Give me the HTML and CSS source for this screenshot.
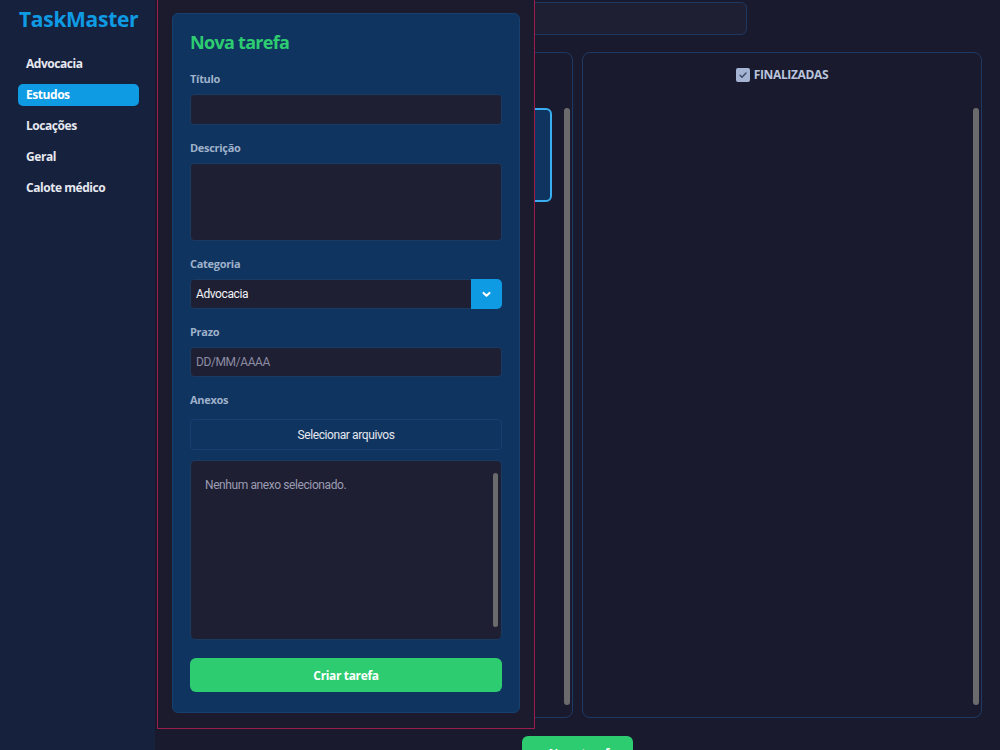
FILE: index.html
```html
<!DOCTYPE html>
<html lang="pt-BR">
<head>
  <meta charset="UTF-8" />
  <title>TaskMaster</title>
  <link rel="stylesheet" href="styles.css">
</head>
<body>
  <aside class="sidebar">
    <h1 class="brand">TaskMaster</h1>
    <nav class="cats">
      <a class="cat">Advocacia</a>
      <a class="cat active">Estudos</a>
      <a class="cat">Locações</a>
      <a class="cat">Geral</a>
      <a class="cat">Calote médico</a>
    </nav>
  </aside>

  <main class="board">
    <input class="search" type="text" />

    <div class="columns">
      <section class="column">
        <h3 class="col-title">EM ANDAMENTO</h3>
        <div class="col-body">
          <div class="col-list">
            <div class="task selected"></div>
          </div>
          <div class="rail"></div>
        </div>
      </section>
      <section class="column">
        <h3 class="col-title">
          <span class="check">
            <svg viewBox="0 0 14 14" width="14" height="14"><path d="M4 7.3l2 2 4-4.3" fill="none" stroke="#3b4a66" stroke-width="1.4" stroke-linecap="round" stroke-linejoin="round"/></svg>
          </span>
          FINALIZADAS
        </h3>
        <div class="col-body">
          <div class="col-list"></div>
          <div class="rail"></div>
        </div>
      </section>
    </div>

    <div class="actions">
      <button class="btn-new">+ Nova tarefa</button>
    </div>
  </main>

  <!-- painel de nova tarefa -->
  <div class="modal">
    <form class="modal-card">
      <h2 class="modal-title">Nova tarefa</h2>

      <div class="field">
        <label>Título</label>
        <input type="text" class="inp" />
      </div>

      <div class="field">
        <label>Descrição</label>
        <textarea class="inp area"></textarea>
      </div>

      <div class="field">
        <label>Categoria</label>
        <div class="select">
          <span class="select-value">Advocacia</span>
          <span class="select-btn">
            <svg viewBox="0 0 10 10" width="11" height="11"><path d="M2.3 3.6l2.7 2.6 2.7-2.6" fill="none" stroke="#fff" stroke-width="1.9" stroke-linecap="round" stroke-linejoin="round"/></svg>
          </span>
        </div>
      </div>

      <div class="field">
        <label>Prazo</label>
        <input type="text" class="inp short" placeholder="DD/MM/AAAA" />
      </div>

      <div class="field last">
        <label class="lbl-files">Anexos</label>
        <button type="button" class="btn-files">Selecionar arquivos</button>
        <div class="files">
          <p class="files-empty">Nenhum anexo selecionado.</p>
          <div class="rail"></div>
        </div>
      </div>

      <button type="submit" class="btn-create">Criar tarefa</button>
    </form>
  </div>
</body>
</html>
```

FILE: styles.css
```css
* {
  box-sizing: border-box;
}
body {
  margin: 0;
  height: 750px;
  overflow: hidden;
  display: flex;
  background-color: #1a1a2e;
  color: #e6e8ef;
  font-family: 'Open Sans', 'Noto Sans', sans-serif;
}

/* sidebar */
.sidebar {
  width: 155px;
  flex-shrink: 0;
  background-color: #16213e;
  padding: 4px 16px 0 18px;
}
.brand {
  margin: 0 0 0 1px;
  font-size: 21px;
  line-height: 30px;
  font-weight: 700;
  color: #0f9be4;
  letter-spacing: -0.3px;
}
.cats {
  display: flex;
  flex-direction: column;
  gap: 9px;
  margin-top: 19px;
}
.cat {
  display: block;
  height: 22px;
  line-height: 22px;
  padding-left: 8px;
  font-size: 12px;
  font-weight: 700;
  letter-spacing: -0.45px;
  color: #e6e8ef;
  border-radius: 5px;
}
.cat.active {
  background-color: #0f9be4;
  color: #fff;
}

/* board */
.board {
  flex: 1;
  padding: 2px 18px 0 18px;
  display: flex;
  flex-direction: column;
}
.search {
  flex-shrink: 0;
  width: 574px;
  height: 33px;
  background: #1f1f33;
  border: 1px solid #1d3a64;
  border-radius: 6px;
}
.columns {
  flex-shrink: 0;
  margin-top: 17px;
  height: 666px;
  display: flex;
  gap: 9px;
}
.column {
  flex: 1;
  display: flex;
  flex-direction: column;
  border: 1px solid #1d3a64;
  border-radius: 8px;
}
.col-title {
  margin: 0;
  height: 51px;
  display: flex;
  align-items: center;
  justify-content: center;
  gap: 4px;
  padding-bottom: 8px;
  font-size: 12px;
  font-weight: 700;
  letter-spacing: -0.35px;
  color: #b9c4dc;
}
.check {
  width: 14px;
  height: 14px;
  border-radius: 2px;
  background-color: #a4b4d2;
  display: flex;
}
.col-body {
  flex: 1;
  display: flex;
  gap: 12px;
  padding: 4px 2px 12px 8px;
}
.col-list {
  flex: 1;
}
.task {
  height: 94px;
  border-radius: 6px;
  background-color: #0f3460;
}
.task.selected {
  border: 2px solid #3aaef0;
}
.rail {
  width: 6px;
  border-radius: 3px;
  background-color: #6b6b6e;
}
.actions {
  display: flex;
  justify-content: center;
  margin-top: 18px;
}
.btn-new {
  width: 111px;
  height: 34px;
  border: none;
  border-radius: 6px;
  background-color: #2ecc71;
  color: #fff;
  font-family: inherit;
  font-size: 12px;
  font-weight: 700;
  letter-spacing: -0.35px;
}

/* modal */
.modal {
  position: fixed;
  left: 157px;
  top: -10px;
  width: 378px;
  height: 739px;
  padding: 22px 14px 15px 14px;
  background-color: #1b1b2d;
  border: 1px solid #9a1d4e;
  display: flex;
}
.modal-card {
  flex: 1;
  background-color: #0f3460;
  border: 1px solid #17406f;
  border-radius: 6px;
  padding: 17px;
  display: flex;
  flex-direction: column;
}
.modal-title {
  margin: 0 0 19px;
  font-size: 18px;
  line-height: 22px;
  font-weight: 700;
  letter-spacing: -0.7px;
  color: #2ecc71;
}
.field {
  display: flex;
  flex-direction: column;
  margin-bottom: 16px;
}
.field label {
  font-size: 11px;
  line-height: 14px;
  font-weight: 700;
  letter-spacing: -0.3px;
  color: #9fb1ca;
  margin-bottom: 8px;
}
.inp {
  height: 31px;
  width: 100%;
  background-color: #1f1f33;
  border: 1px solid #1a3a62;
  border-radius: 4px;
  padding: 0 5px;
  color: #e6e8ef;
  font-family: Roboto, sans-serif;
  font-size: 12px;
  letter-spacing: -0.4px;
  outline: none;
}
.inp.short {
  height: 30px;
}
.inp::placeholder {
  color: #8c8ca3;
}
.area {
  height: 78px;
  resize: none;
}
.select {
  display: flex;
  height: 30px;
  border-radius: 5px;
  overflow: hidden;
}
.select-value {
  flex: 1;
  display: flex;
  align-items: center;
  padding-left: 5px;
  background-color: #1f1f33;
  border: 1px solid #1a3a62;
  border-right: none;
  border-radius: 4px 0 0 4px;
  font-family: Roboto, sans-serif;
  font-size: 12px;
  letter-spacing: -0.4px;
  color: #f2f2f5;
}
.select-btn {
  width: 31px;
  display: flex;
  align-items: center;
  justify-content: center;
  background-color: #0f9be4;
}
.field label.lbl-files {
  margin-bottom: 12px;
}
.btn-files {
  height: 31px;
  background-color: #0f3460;
  border: 1px solid #174070;
  border-radius: 4px;
  color: #e6e8ef;
  font-family: Roboto, sans-serif;
  font-size: 12px;
  letter-spacing: -0.4px;
}
.files {
  margin-top: 10px;
  height: 180px;
  display: flex;
  background-color: #1f1f33;
  border: 1px solid #1a3a62;
  border-radius: 5px;
  padding: 12px 3px 12px 14px;
}
.files-empty {
  flex: 1;
  margin: 5px 0 0;
  font-family: Roboto, sans-serif;
  font-size: 12px;
  letter-spacing: -0.4px;
  color: #9c9cb2;
}
.files .rail {
  width: 5px;
  border-radius: 3px;
}
.field.last {
  margin-bottom: 18px;
}
.btn-create {
  height: 34px;
  border: none;
  border-radius: 6px;
  background-color: #2ecc71;
  color: #fff;
  font-family: inherit;
  font-size: 12px;
  font-weight: 700;
  letter-spacing: -0.35px;
}
```
